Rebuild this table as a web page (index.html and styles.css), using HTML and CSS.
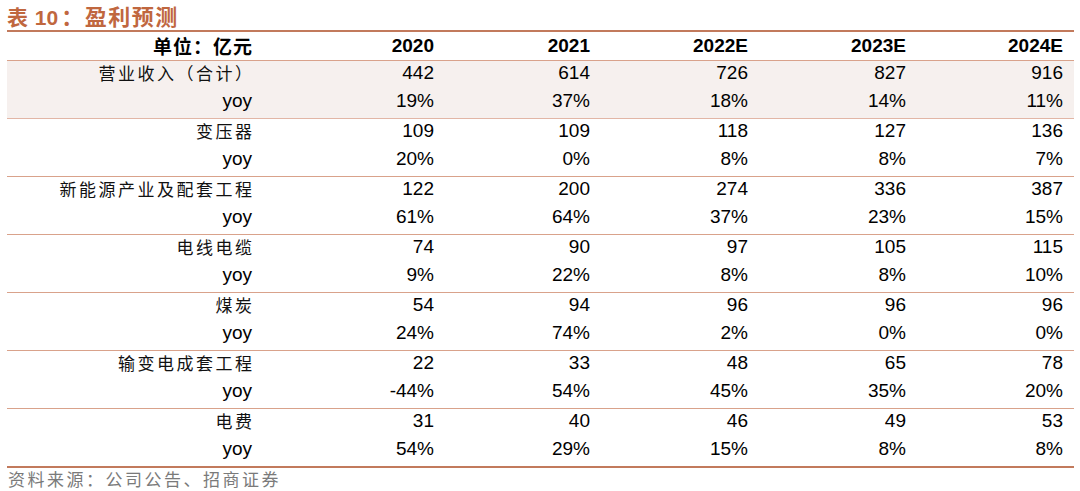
FILE: index.html
```html
<!DOCTYPE html>
<html lang="zh">
<head>
<meta charset="utf-8">
<title>表 10：盈利预测</title>
<link rel="stylesheet" href="styles.css">
</head>
<body>
<div class="page">
  <h1 class="title"><span class="num">表 10</span><span class="cnt">：盈利预测</span></h1>
  <div class="table">
    <div class="row head">
      <div class="cell label">单位：亿元</div>
      <div class="cell">2020</div>
      <div class="cell">2021</div>
      <div class="cell">2022E</div>
      <div class="cell">2023E</div>
      <div class="cell last">2024E</div>
    </div>
    <div class="group shaded">
      <div class="row"><div class="cell label cn">营业收入（合计）</div><div class="cell">442</div><div class="cell">614</div><div class="cell">726</div><div class="cell">827</div><div class="cell last">916</div></div>
      <div class="row"><div class="cell label">yoy</div><div class="cell">19%</div><div class="cell">37%</div><div class="cell">18%</div><div class="cell">14%</div><div class="cell last">11%</div></div>
    </div>
    <div class="group">
      <div class="row"><div class="cell label cn">变压器</div><div class="cell">109</div><div class="cell">109</div><div class="cell">118</div><div class="cell">127</div><div class="cell last">136</div></div>
      <div class="row"><div class="cell label">yoy</div><div class="cell">20%</div><div class="cell">0%</div><div class="cell">8%</div><div class="cell">8%</div><div class="cell last">7%</div></div>
    </div>
    <div class="group">
      <div class="row"><div class="cell label cn">新能源产业及配套工程</div><div class="cell">122</div><div class="cell">200</div><div class="cell">274</div><div class="cell">336</div><div class="cell last">387</div></div>
      <div class="row"><div class="cell label">yoy</div><div class="cell">61%</div><div class="cell">64%</div><div class="cell">37%</div><div class="cell">23%</div><div class="cell last">15%</div></div>
    </div>
    <div class="group">
      <div class="row"><div class="cell label cn">电线电缆</div><div class="cell">74</div><div class="cell">90</div><div class="cell">97</div><div class="cell">105</div><div class="cell last">115</div></div>
      <div class="row"><div class="cell label">yoy</div><div class="cell">9%</div><div class="cell">22%</div><div class="cell">8%</div><div class="cell">8%</div><div class="cell last">10%</div></div>
    </div>
    <div class="group">
      <div class="row"><div class="cell label cn">煤炭</div><div class="cell">54</div><div class="cell">94</div><div class="cell">96</div><div class="cell">96</div><div class="cell last">96</div></div>
      <div class="row"><div class="cell label">yoy</div><div class="cell">24%</div><div class="cell">74%</div><div class="cell">2%</div><div class="cell">0%</div><div class="cell last">0%</div></div>
    </div>
    <div class="group">
      <div class="row"><div class="cell label cn">输变电成套工程</div><div class="cell">22</div><div class="cell">33</div><div class="cell">48</div><div class="cell">65</div><div class="cell last">78</div></div>
      <div class="row"><div class="cell label">yoy</div><div class="cell">-44%</div><div class="cell">54%</div><div class="cell">45%</div><div class="cell">35%</div><div class="cell last">20%</div></div>
    </div>
    <div class="group final">
      <div class="row"><div class="cell label cn">电费</div><div class="cell">31</div><div class="cell">40</div><div class="cell">46</div><div class="cell">49</div><div class="cell last">53</div></div>
      <div class="row"><div class="cell label">yoy</div><div class="cell">54%</div><div class="cell">29%</div><div class="cell">15%</div><div class="cell">8%</div><div class="cell last">8%</div></div>
    </div>
  </div>
  <div class="source">资料来源：公司公告、招商证券</div>
</div>
</body>
</html>
```

FILE: styles.css
```css
html, body {
  margin: 0;
  padding: 0;
  background: #ffffff;
}

.page {
  width: 1080px;
  height: 491px;
  padding: 0 6px 0 7px;
  box-sizing: border-box;
  font-family: "Liberation Sans", Arial, "Noto Sans CJK SC", sans-serif;
  color: #000;
}

.title {
  margin: 0;
  height: 30px;
  line-height: 30px;
  font-size: 21px;
  font-weight: bold;
  color: #c0673f;
  font-family: "Noto Sans CJK SC", sans-serif;
}

.title .num {
  font-family: "Liberation Sans", "Noto Sans CJK SC", sans-serif;
  word-spacing: 1px;
}

.title .cnt {
  font-size: 22px;
  letter-spacing: 1.5px;
  margin-left: 3px;
}

.table {
  width: 1067px;
  border-top: 2px solid #c27a5c;
  border-bottom: 2px solid #c27a5c;
}

.row {
  display: grid;
  grid-template-columns: 255px 182px 156px 158px 158px 158px;
  height: 28px;
  align-items: start;
  font-size: 19px;
}

.row + .row {
  height: 29px;
}

.cell {
  text-align: right;
  padding-right: 10px;
  white-space: nowrap;
  line-height: 24px;
}

.cell.last {
  padding-right: 11px;
}

.head {
  height: 28px;
  align-items: center;
  font-weight: bold;
  border-bottom: 1px solid #d9a28b;
}

.head .cell {
  line-height: 28px;
}

.group {
  border-bottom: 1px solid #d9a28b;
}

.group.final {
  border-bottom: none;
}

.shaded {
  background: #f6f0ee;
  border-bottom: 1px solid #e2b6a6;
}

.head .label {
  font-family: "Noto Sans CJK SC", sans-serif;
  font-size: 19px;
  letter-spacing: 1px;
  padding-right: 9px;
}

.cn {
  font-family: "Noto Sans CJK SC", sans-serif;
  font-size: 17px;
  letter-spacing: 2.5px;
  padding-right: 7.5px;
  color: #111;
}

.source {
  margin-top: 0;
  font-family: "Noto Sans CJK SC", sans-serif;
  font-size: 17px;
  letter-spacing: 2.5px;
  color: #7a7a7a;
  padding-left: 1px;
  line-height: 22px;
}
```
